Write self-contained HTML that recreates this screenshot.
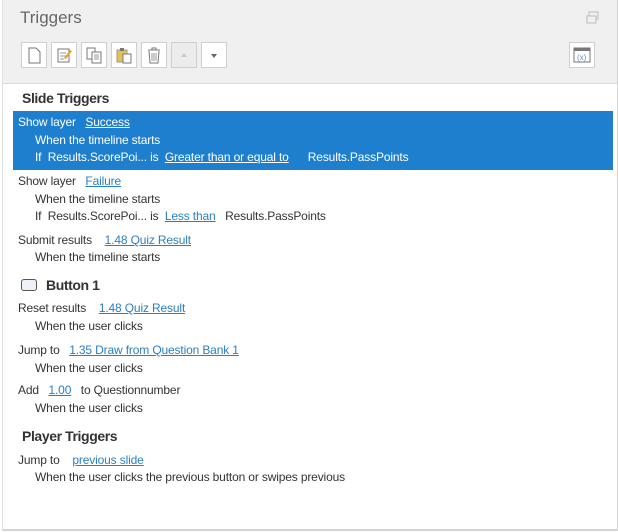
<!DOCTYPE html>
<html><head><style>
body{margin:0;width:618px;height:532px;background:#fff;font-family:"Liberation Sans",sans-serif;position:relative;overflow:hidden;color:#333}
.panel{position:absolute;left:2px;top:0;width:614px;height:529px;border-right:2px solid #d4d4d4;border-bottom:2px solid #d4d4d4;border-left:1px solid #e0e0e0}
.hdr{position:absolute;left:0;top:0;width:614px;height:83px;background:#f0f0f0;border-bottom:1px solid #dadada}
.t{position:absolute;font-size:12px;line-height:16px;white-space:nowrap;letter-spacing:-0.15px}
.a{color:#2a7fc4;text-decoration:underline}
.btn{position:absolute;top:42px;width:26px;height:26px;border:1px solid #cfcfcf;background:#fff;box-sizing:border-box}
.sel{position:absolute;left:13px;top:111px;width:600px;height:59px;background:#1e7fcf}
.sel .t{color:#fff}.sel .a{color:#fff}
h{position:absolute;font-size:14px;color:#333;font-weight:bold;letter-spacing:-0.4px}
</style></head><body>
<div class="panel">
<div class="hdr">
<div style="position:absolute;left:17px;top:8px;font-size:17px;color:#666">Triggers</div>
<svg style="position:absolute;left:583px;top:11px" width="14" height="14"><rect x="3" y="1" width="9" height="7" fill="none" stroke="#bbb"/><rect x="1" y="5" width="9" height="7" fill="#f0f0f0" stroke="#bbb"/></svg>
<div class="btn" style="left:18px"><svg width="24" height="24"><path d="M7 5h7l4 4v11H7z" fill="#fff" stroke="#777"/></svg></div>
<div class="btn" style="left:48px"><svg width="24" height="24"><rect x="6" y="6" width="11" height="13" fill="#fff" stroke="#777"/><path d="M8 10h6M8 13h6M8 16h4" stroke="#999"/><path d="M12 15l6-8 2 1-6 8z" fill="#e8a030"/></svg></div>
<div class="btn" style="left:78px"><svg width="24" height="24"><rect x="5" y="5" width="8" height="11" fill="#fff" stroke="#777"/><rect x="10" y="9" width="9" height="11" fill="#fff" stroke="#777"/><path d="M12 12h5M12 14h5M12 16h5" stroke="#999"/></svg></div>
<div class="btn" style="left:108px"><svg width="24" height="24"><rect x="5" y="7" width="10" height="12" fill="#e6c052" stroke="#999"/><rect x="8" y="5" width="4" height="3" fill="#777"/><rect x="11" y="11" width="8" height="9" fill="#fff" stroke="#777"/></svg></div>
<div class="btn" style="left:138px"><svg width="24" height="24"><path d="M6 7h12M10 7V5h4v2M7 8l1 12h8l1-12" fill="none" stroke="#777"/><path d="M10 10v8M12 10v8M14 10v8" stroke="#999"/></svg></div>
<div class="btn" style="left:168px;background:#ececec"><svg width="24" height="24"><path d="M9 14l3-4 3 4z" fill="#ccc"/></svg></div>
<div class="btn" style="left:198px"><svg width="24" height="24"><path d="M9 11h6l-3 4z" fill="#666"/></svg></div>
<div class="btn" style="left:566px;top:42px"><svg width="24" height="24"><rect x="4" y="5" width="16" height="14" fill="#fff" stroke="#777"/><rect x="4" y="5" width="16" height="3" fill="#777"/><text x="7" y="17" font-size="8" fill="#6a8ec8" font-family="Liberation Sans">(x)</text></svg></div>
</div>
</div>
<h style="left:22px;top:90px">Slide Triggers</h>
<div class="sel"></div>
<div class="sel" style="background:none">
<div class="t" style="left:5px;top:3px">Show layer &nbsp;&nbsp;<span class="a">Success</span></div>
<div class="t" style="left:22px;top:21px">When the timeline starts</div>
<div class="t" style="left:22px;top:38px">If &nbsp;Results.ScorePoi... is &nbsp;<span class="a">Greater than or equal to</span> &nbsp;&nbsp;&nbsp;&nbsp;&nbsp;Results.PassPoints</div>
</div>
<div class="t" style="left:18px;top:173px">Show layer &nbsp;&nbsp;<span class="a">Failure</span></div>
<div class="t" style="left:35px;top:191px">When the timeline starts</div>
<div class="t" style="left:35px;top:208px">If &nbsp;Results.ScorePoi... is &nbsp;<span class="a">Less than</span> &nbsp;&nbsp;Results.PassPoints</div>
<div class="t" style="left:18px;top:232px">Submit results &nbsp;&nbsp;&nbsp;<span class="a">1.48 Quiz Result</span></div>
<div class="t" style="left:35px;top:249px">When the timeline starts</div>
<div style="position:absolute;left:21px;top:279px;width:14px;height:10px;border:1px solid #555;border-radius:3px;background:#eef2f8"></div>
<h style="left:46px;top:277px">Button 1</h>
<div class="t" style="left:18px;top:300px">Reset results &nbsp;&nbsp;&nbsp;<span class="a">1.48 Quiz Result</span></div>
<div class="t" style="left:35px;top:318px">When the user clicks</div>
<div class="t" style="left:18px;top:342px">Jump to &nbsp;&nbsp;<span class="a">1.35 Draw from Question Bank 1</span></div>
<div class="t" style="left:35px;top:360px">When the user clicks</div>
<div class="t" style="left:18px;top:382px">Add &nbsp;&nbsp;<span class="a">1.00</span> &nbsp;&nbsp;to Questionnumber</div>
<div class="t" style="left:35px;top:400px">When the user clicks</div>
<h style="left:22px;top:428px">Player Triggers</h>
<div class="t" style="left:18px;top:452px">Jump to &nbsp;&nbsp;&nbsp;<span class="a">previous slide</span></div>
<div class="t" style="left:35px;top:469px">When the user clicks the previous button or swipes previous</div>
</body></html>
